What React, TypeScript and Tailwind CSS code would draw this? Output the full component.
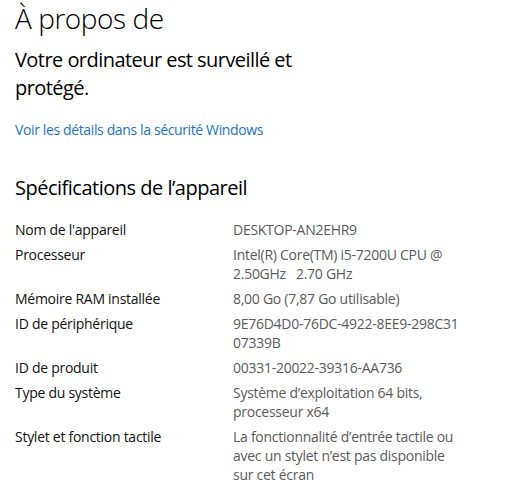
import React from "react";

const rows: [string, string[]][] = [
  ["Nom de l'appareil", ["DESKTOP-AN2EHR9"]],
  ["Processeur", ["Intel(R) Core(TM) i5-7200U CPU @", "2.50GHz\u00a0\u00a0 2.70 GHz"]],
  ["Mémoire RAM installée", ["8,00 Go (7,87 Go utilisable)"]],
  ["ID de périphérique", ["9E76D4D0-76DC-4922-8EE9-298C31", "07339B"]],
  ["ID de produit", ["00331-20022-39316-AA736"]],
  ["Type du système", ["Système d\u2019exploitation 64 bits,", "processeur x64"]],
  ["Stylet et fonction tactile", ["La fonctionnalité d\u2019entrée tactile ou", "avec un stylet n\u2019est pas disponible", "sur cet écran"]],
];

export default function App() {
  return (
    <div className="w-[525px] h-[497px] bg-white overflow-hidden pl-[15px] pt-0 text-black" style={{ fontFamily: '"Segoe UI", "Open Sans", sans-serif' }}>
      <h1 className="text-[28px] leading-[36px] font-light tracking-[-0.45px]">À propos de</h1>
      <p className="mt-[10px] text-[20px] leading-[28px] w-[300px] tracking-[-0.55px]">Votre ordinateur est surveillé et protégé.</p>
      <a className="block mt-[18px] text-[14px] leading-[19px] text-[#1a73c4] tracking-[-0.37px]">Voir les détails dans la sécurité Windows</a>
      <h2 className="mt-[35px] text-[20px] leading-[28px] tracking-[-0.5px]">Spécifications de l’appareil</h2>
      <div className="mt-[18px] flex flex-col gap-[6px]">
        {rows.map(([k, v]) => (
          <div key={k} className="flex text-[14px] leading-[19px] tracking-[-0.27px]">
            <div className="w-[218px] shrink-0 text-[#111]">{k}</div>
            <div className="text-[#5a5a5a]">
              {v.map((l, i) => (
                <div key={i} className="whitespace-pre">{l}</div>
              ))}
            </div>
          </div>
        ))}
      </div>
    </div>
  );
}
